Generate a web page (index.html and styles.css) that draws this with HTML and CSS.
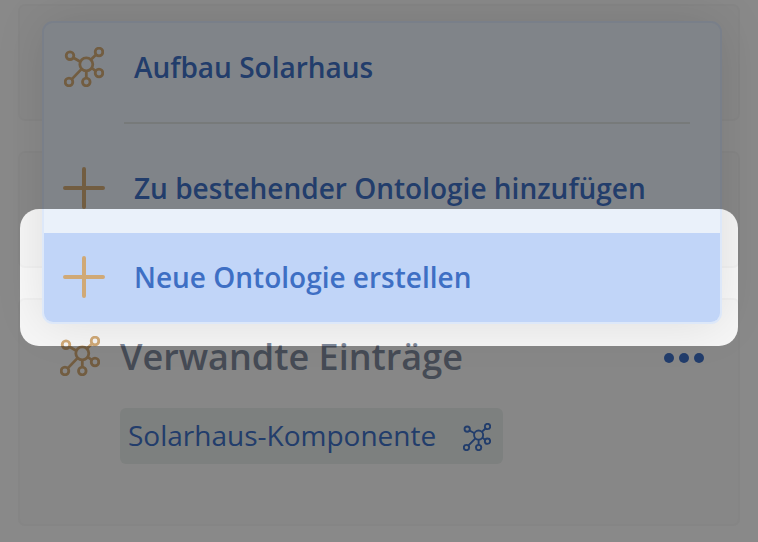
FILE: index.html
```
<!DOCTYPE html>
<html lang="de">
<head>
  <meta charset="UTF-8" />
  <title>Verwandte Einträge</title>
  <meta name="viewport" content="width=device-width, initial-scale=1.0" />
  <link rel="stylesheet" href="styles.css">
</head>
<body>
  <svg class="sprite" width="0" height="0">
    <symbol id="graph" viewBox="0 0 40 40">
      <g fill="none" stroke="currentColor">
        <circle cx="22.3" cy="17.3" r="6.5" />
        <circle cx="6" cy="8.7" r="3.8" />
        <circle cx="35" cy="5" r="3.8" />
        <circle cx="35" cy="26" r="3.8" />
        <circle cx="22.3" cy="35" r="3.8" />
        <circle cx="5" cy="35" r="3.8" />
        <path d="M9.4 10.7l7 4M32 7.8l-5 4.8M31.5 23.8l-3.7-2.8M22.3 31v-7.2M7.9 32.1l9.8-10.2" />
      </g>
    </symbol>
    <symbol id="plus" viewBox="0 0 42 42">
      <path d="M21 2v38M2 21h38" fill="none" stroke="currentColor" stroke-width="4" stroke-linecap="round" />
    </symbol>
  </svg>

  <main class="page">
    <section class="card"></section>
    <section class="card"></section>
    <section class="card related">
      <header class="related-header">
        <svg class="icon graph"><use href="#graph" /></svg>
        <h2>Verwandte Einträge</h2>
        <svg class="more" viewBox="0 0 40 10" fill="currentColor">
          <circle cx="5" cy="5" r="5" />
          <circle cx="20" cy="5" r="5" />
          <circle cx="35" cy="5" r="5" />
        </svg>
      </header>
      <a class="chip">
        <span>Solarhaus-Komponente</span>
        <svg class="chip-icon"><use href="#graph" /></svg>
      </a>
    </section>
  </main>

  <div class="menu">
    <div class="item">
      <svg class="icon graph"><use href="#graph" /></svg>
      <span>Aufbau Solarhaus</span>
    </div>
    <hr class="divider">
    <div class="item">
      <svg class="icon plus"><use href="#plus" /></svg>
      <span>Zu bestehender Ontologie hinzufügen</span>
    </div>
    <div class="item active">
      <svg class="icon plus"><use href="#plus" /></svg>
      <span>Neue Ontologie erstellen</span>
    </div>
  </div>

  <div class="spotlight"></div>
</body>
</html>
```

FILE: styles.css
```
* {
  box-sizing: border-box;
}
body {
  margin: 0;
  width: 758px;
  height: 542px;
  overflow: hidden;
  position: relative;
  background: #f9f9f9;
  color: #3e6fc4;
  font-family: "Open Sans", sans-serif;
  font-size: 28px;
}
.sprite {
  position: absolute;
}
.page {
  display: flex;
  flex-direction: column;
  gap: 30px;
  padding: 4px 18px 0;
}
.card {
  height: 117px;
  border: 2px solid #f2f2f2;
  border-radius: 7px;
  background: #f6f6f6;
}
.related {
  height: 228px;
  padding: 31px 34px 0 40px;
}
.related-header {
  display: flex;
  align-items: center;
  height: 52px;
}
.related-header h2 {
  flex: 1;
  margin: 0 0 0 20px;
  font-size: 36px;
  font-weight: 600;
  line-height: 52px;
  color: #7f899b;
}
.icon {
  flex: none;
  color: #d0a977;
}
.graph {
  width: 40px;
  height: 40px;
  stroke-width: 2.8;
}
.related-header .graph {
  margin-bottom: 2px;
}
.plus {
  width: 42px;
  height: 42px;
}
.more {
  width: 40px;
  height: 10px;
  margin-top: 2px;
}
.chip {
  display: flex;
  justify-content: space-between;
  align-items: center;
  width: 383px;
  height: 56px;
  margin: 25px 0 0 60px;
  padding: 0 12px 0 8px;
  border-radius: 6px;
  background: #e4e9e7;
}
.chip span {
  margin-bottom: 2px;
}
.chip-icon {
  width: 28px;
  height: 28px;
  margin-top: 2px;
  stroke-width: 2.7;
}
.menu {
  position: absolute;
  left: 42px;
  top: 21px;
  width: 680px;
  height: 303px;
  border: 2px solid #dde8f9;
  border-radius: 11px;
  background: #eaf1fa;
  box-shadow: 0 0 50px rgba(0, 0, 0, 0.1);
  overflow: hidden;
}
.item {
  display: flex;
  align-items: center;
  gap: 29px;
  height: 89px;
  padding: 0 0 2px 19px;
  font-weight: 600;
  white-space: nowrap;
}
.item .graph {
  margin: 0 1px;
}
.active {
  background: #c1d5f8;
}
.divider {
  height: 2px;
  margin: 10px 30px 20px 80px;
  border: none;
  background: #d9dfde;
}
/* dims everything outside the highlighted entry */
.spotlight {
  position: absolute;
  left: 19.5px;
  top: 209px;
  width: 718.5px;
  height: 136.5px;
  border-radius: 19px;
  box-shadow: 0 0 0 1000px rgba(0, 0, 0, 0.45);
}
```
